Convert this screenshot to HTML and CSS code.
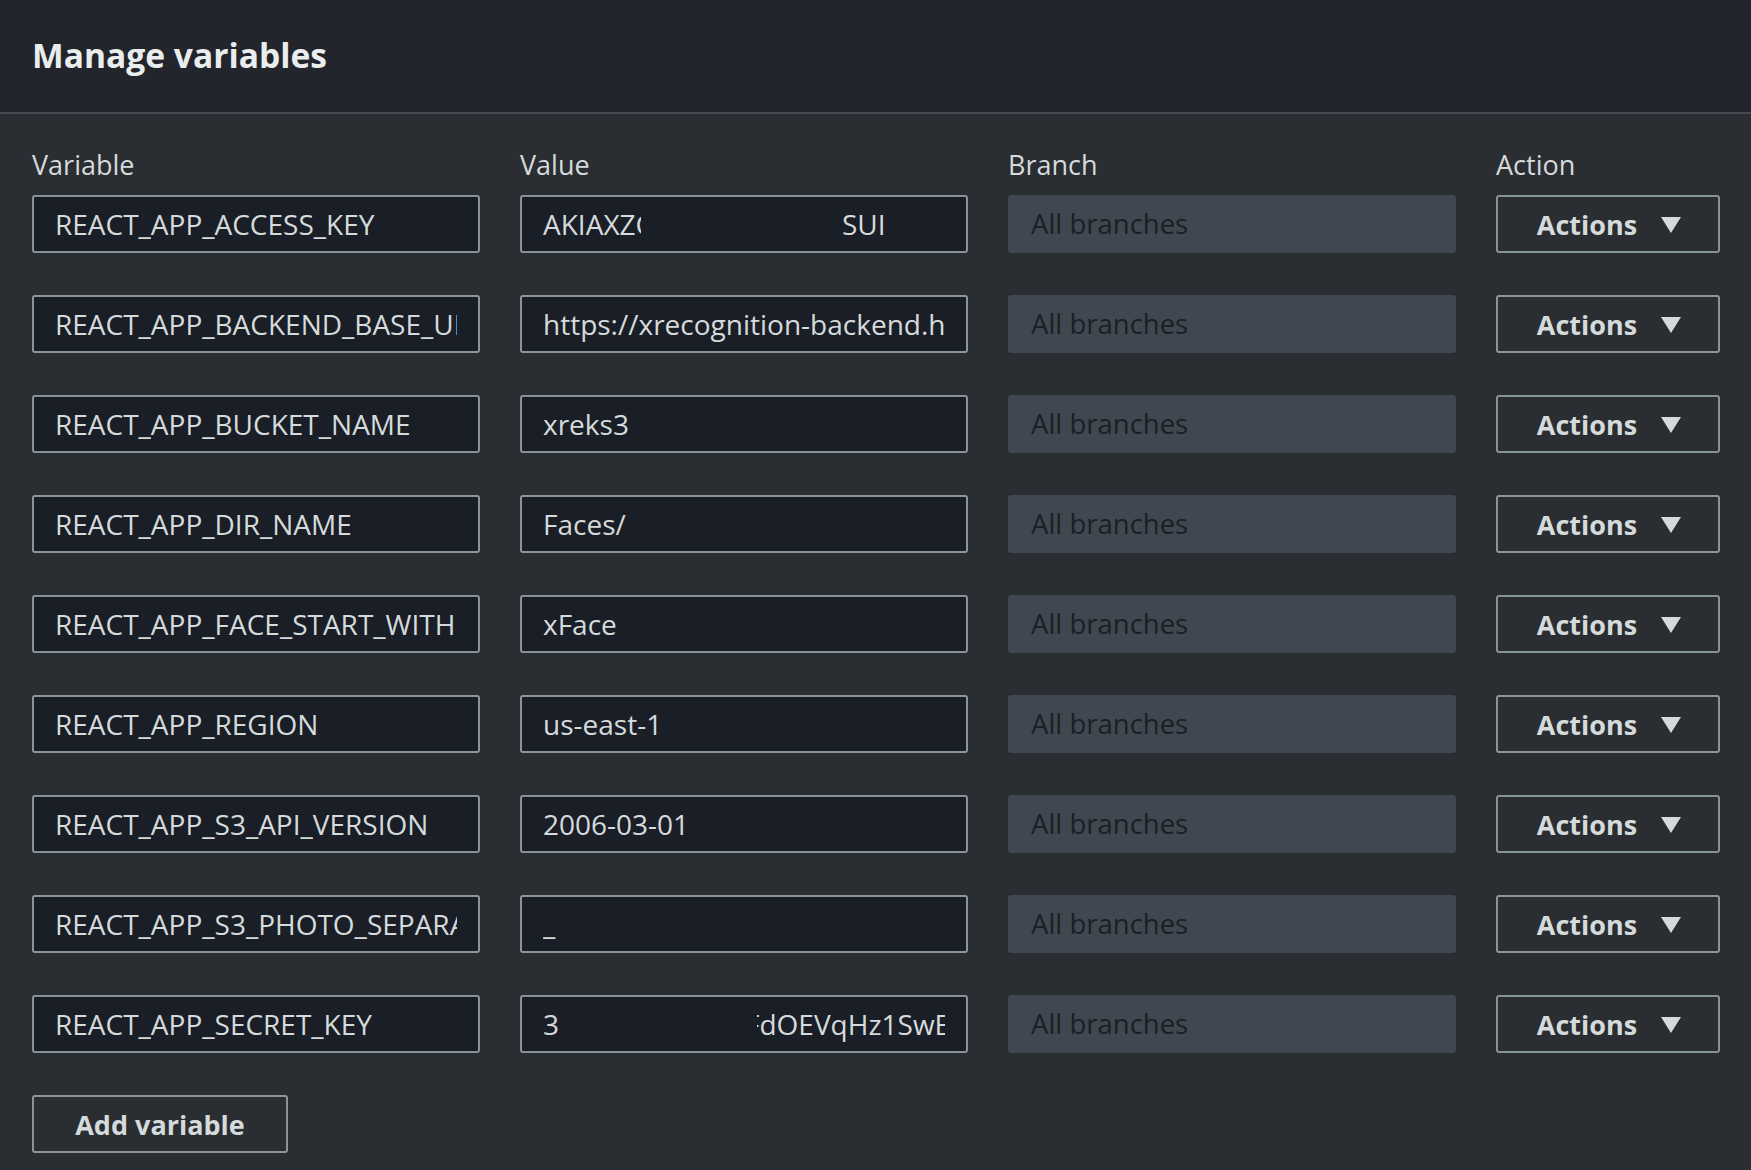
FILE: index.html
```html
<!DOCTYPE html>
<html lang="en">
<head>
<meta charset="utf-8">
<title>Manage variables</title>
<link rel="stylesheet" href="styles.css">
</head>
<body>
<div class="panel">
  <header class="panel-header">
    <h1 class="title">Manage variables</h1>
  </header>
  <div class="panel-body">
    <div class="grid labels">
      <div class="label">Variable</div>
      <div class="label">Value</div>
      <div class="label">Branch</div>
      <div class="label">Action</div>
    </div>
    <div class="rows">
      <div class="grid row">
        <div class="field"><span class="txt">REACT_APP_ACCESS_KEY</span></div>
        <div class="field"><span class="txt split"><span class="cut cut-a">AKIAXZC</span><span class="gap-a"></span><span>SUI</span></span></div>
        <div class="field disabled"><span class="txt">All branches</span></div>
        <button class="btn actions">Actions <span class="caret"></span></button>
      </div>
      <div class="grid row">
        <div class="field"><span class="txt">REACT_APP_BACKEND_BASE_URL</span></div>
        <div class="field"><span class="txt">https://xrecognition-backend.herokuapp.com</span></div>
        <div class="field disabled"><span class="txt">All branches</span></div>
        <button class="btn actions">Actions <span class="caret"></span></button>
      </div>
      <div class="grid row">
        <div class="field"><span class="txt">REACT_APP_BUCKET_NAME</span></div>
        <div class="field"><span class="txt">xreks3</span></div>
        <div class="field disabled"><span class="txt">All branches</span></div>
        <button class="btn actions">Actions <span class="caret"></span></button>
      </div>
      <div class="grid row">
        <div class="field"><span class="txt">REACT_APP_DIR_NAME</span></div>
        <div class="field"><span class="txt">Faces/</span></div>
        <div class="field disabled"><span class="txt">All branches</span></div>
        <button class="btn actions">Actions <span class="caret"></span></button>
      </div>
      <div class="grid row">
        <div class="field"><span class="txt">REACT_APP_FACE_START_WITH</span></div>
        <div class="field"><span class="txt">xFace</span></div>
        <div class="field disabled"><span class="txt">All branches</span></div>
        <button class="btn actions">Actions <span class="caret"></span></button>
      </div>
      <div class="grid row">
        <div class="field"><span class="txt">REACT_APP_REGION</span></div>
        <div class="field"><span class="txt">us-east-1</span></div>
        <div class="field disabled"><span class="txt">All branches</span></div>
        <button class="btn actions">Actions <span class="caret"></span></button>
      </div>
      <div class="grid row">
        <div class="field"><span class="txt">REACT_APP_S3_API_VERSION</span></div>
        <div class="field"><span class="txt">2006-03-01</span></div>
        <div class="field disabled"><span class="txt">All branches</span></div>
        <button class="btn actions">Actions <span class="caret"></span></button>
      </div>
      <div class="grid row">
        <div class="field"><span class="txt">REACT_APP_S3_PHOTO_SEPARATOR</span></div>
        <div class="field"><span class="txt">_</span></div>
        <div class="field disabled"><span class="txt">All branches</span></div>
        <button class="btn actions">Actions <span class="caret"></span></button>
      </div>
      <div class="grid row">
        <div class="field"><span class="txt">REACT_APP_SECRET_KEY</span></div>
        <div class="field"><span class="txt split"><span>3</span><span class="tail"><span class="tail-in">FdOEVqHz1SwExk</span></span></span></div>
        <div class="field disabled"><span class="txt">All branches</span></div>
        <button class="btn actions">Actions <span class="caret"></span></button>
      </div>
    </div>
    <button class="btn add">Add variable</button>
  </div>
</div>
</body>
</html>
```

FILE: styles.css
```css
* { box-sizing: border-box; }

html, body {
  margin: 0;
  padding: 0;
  background: #2a2d32;
}

body {
  font-family: "Open Sans", "Noto Sans", "Liberation Sans", Arial, sans-serif;
  color: #d5dbdb;
  width: 1751px;
  height: 1170px;
  overflow: hidden;
}

.panel-header {
  height: 114px;
  background: #22252b;
  border-bottom: 2px solid #454a52;
  display: flex;
  align-items: center;
  padding: 0 32px 2px;
}

.title {
  margin: 0;
  font-size: 33.6px;
  font-weight: 700;
  color: #eaeded;
}

.panel-body {
  padding: 35px 31px 0 32px;
}

.grid {
  display: grid;
  grid-template-columns: 1fr 1fr 1fr 0.5fr;
  column-gap: 40px;
}

.labels {
  height: 46px;
  align-items: start;
}

.label {
  font-size: 27px;
  line-height: 32px;
  color: #d5dbdb;
}

.rows {
  display: flex;
  flex-direction: column;
  gap: 42px;
}

.row {
  height: 58px;
}

.field {
  height: 58px;
  background: #1a1f27;
  border: 2px solid #879596;
  border-radius: 3px;
  padding: 0 21px;
  display: flex;
  align-items: center;
  min-width: 0;
}

.txt {
  display: block;
  width: 100%;
  overflow: hidden;
  white-space: nowrap;
  font-size: 28px;
  line-height: 42px;
  color: #d5dbdb;
}

.split {
  display: flex;
  align-items: center;
}

.cut {
  display: inline-block;
  overflow: hidden;
  flex: none;
}

.cut-a { width: 98px; }
.gap-a { width: 201px; flex: none; }

.tail {
  flex: none;
  width: 188px;
  margin-left: auto;
  overflow: hidden;
  display: flex;
}

.tail-in {
  margin-left: -12px;
}

.field.disabled {
  background: #414750;
  border-color: #414750;
}

.field.disabled .txt {
  color: #1b1f25;
  font-size: 27.5px;
}

.btn {
  font-family: inherit;
  background: transparent;
  border: 2px solid #879596;
  border-radius: 3px;
  color: #d5dbdb;
  font-size: 27px;
  font-weight: 700;
  height: 58px;
  padding: 0;
  cursor: pointer;
}

.actions {
  display: flex;
  align-items: center;
  justify-content: center;
  gap: 24px;
  padding-left: 2px;
}

.caret {
  width: 0;
  height: 0;
  border-left: 10px solid transparent;
  border-right: 10px solid transparent;
  border-top: 16px solid #d5dbdb;
  margin-top: 2px;
}

.add {
  margin-top: 42px;
  width: 256px;
}
```
